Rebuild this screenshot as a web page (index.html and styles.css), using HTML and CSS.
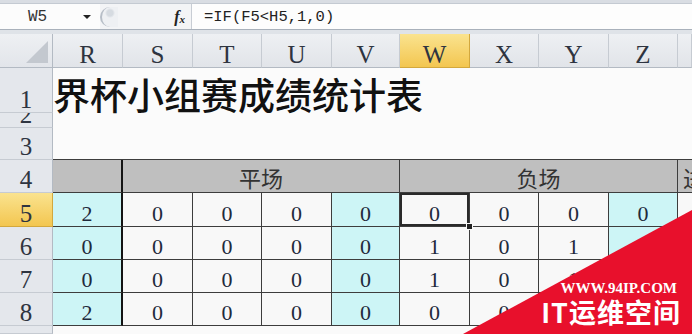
FILE: index.html
```html
<!DOCTYPE html>
<html lang="zh-CN">
<head>
    <meta charset="UTF-8">
    <meta name="viewport" content="width=device-width, initial-scale=1.0">
    <title>世界杯小组赛成绩统计表</title>
    <link rel="stylesheet" href="styles.css">
</head>
<body>
    <div class="top-edge"></div>

    <!-- 编辑栏 -->
    <div class="formula-bar">
        <div class="name-box">
            <span class="cell-ref">W5</span>
            <span class="drop"></span>
        </div>
        <div class="splitter"><span class="knob"></span></div>
        <div class="fx"><i>f</i><span>x</span></div>
        <div class="formula">=IF(F5&lt;H5,1,0)</div>
    </div>
    <div class="band"></div>

    <!-- 工作表 -->
    <div class="sheet">
        <div class="corner"><span class="tri"></span></div>
        <div class="col-head">R</div>
        <div class="col-head">S</div>
        <div class="col-head">T</div>
        <div class="col-head">U</div>
        <div class="col-head">V</div>
        <div class="col-head active">W</div>
        <div class="col-head">X</div>
        <div class="col-head">Y</div>
        <div class="col-head">Z</div>
        <div class="col-head"></div>

        <div class="row-head">1</div>
        <div class="blank">
            <div class="title">界杯小组赛成绩统计表</div>
        </div>
        <div class="row-head">2</div>
        <div class="row-head">3</div>

        <div class="row-head">4</div>
        <div class="cell hd first"></div>
        <div class="cell hd span4">平场</div>
        <div class="cell hd span4">负场</div>
        <div class="cell hd edge"><span class="peek">进</span></div>

        <div class="row-head active">5</div>
        <div class="cell cy first">2</div>
        <div class="cell">0</div>
        <div class="cell">0</div>
        <div class="cell">0</div>
        <div class="cell cy">0</div>
        <div class="cell sel">0</div>
        <div class="cell">0</div>
        <div class="cell">0</div>
        <div class="cell cy">0</div>
        <div class="cell edge"></div>

        <div class="row-head">6</div>
        <div class="cell cy first">0</div>
        <div class="cell">0</div>
        <div class="cell">0</div>
        <div class="cell">0</div>
        <div class="cell cy">0</div>
        <div class="cell">1</div>
        <div class="cell">0</div>
        <div class="cell">1</div>
        <div class="cell cy">2</div>
        <div class="cell edge"></div>

        <div class="row-head">7</div>
        <div class="cell cy first">0</div>
        <div class="cell">0</div>
        <div class="cell">0</div>
        <div class="cell">0</div>
        <div class="cell cy">0</div>
        <div class="cell">1</div>
        <div class="cell">0</div>
        <div class="cell">1</div>
        <div class="cell cy">2</div>
        <div class="cell edge"></div>

        <div class="row-head">8</div>
        <div class="cell cy first">2</div>
        <div class="cell">0</div>
        <div class="cell">0</div>
        <div class="cell">0</div>
        <div class="cell cy">0</div>
        <div class="cell">0</div>
        <div class="cell">0</div>
        <div class="cell">0</div>
        <div class="cell cy">0</div>
        <div class="cell edge"></div>

        <div class="row-head"></div>
        <div class="blank-low"></div>
    </div>

    <!-- 水印 -->
    <div class="watermark">
        <svg width="229" height="124" viewBox="0 0 229 124">
            <polygon points="0,124 229,0 229,124" fill="#e8102c"/>
        </svg>
        <div class="wm-text">
            <div class="wm-url">WWW.94IP.COM</div>
            <div class="wm-name">IT运维空间</div>
        </div>
    </div>
</body>
</html>
```

FILE: styles.css
```css
body {
    margin: 0;
    width: 692px;
    height: 334px;
    overflow: hidden;
    position: relative;
    background-color: #fafafa;
    font-family: "Liberation Serif", serif;
}

.top-edge {
    height: 3px;
    background-color: #d9dde3;
}

/* 编辑栏 */
.formula-bar {
    display: flex;
    height: 25px;
    border-top: 1px solid #c4cad2;
    border-bottom: 1px solid #a9b1bb;
    background-color: #f3f4f6;
}

.name-box {
    width: 100px;
    display: flex;
    align-items: center;
    background-color: #fcfcfc;
}

.cell-ref {
    margin-left: 28px;
    font-family: "Liberation Mono", monospace;
    font-size: 16px;
    color: #333;
}

.drop {
    margin-left: 36px;
    width: 0;
    height: 0;
    border-left: 4px solid transparent;
    border-right: 4px solid transparent;
    border-top: 4px solid #222;
}

.splitter {
    width: 18px;
    display: flex;
    align-items: center;
}

.knob {
    width: 16px;
    height: 20px;
    border-radius: 10px 0 0 10px;
    border-left: 2px solid #b7bec7;
    background: radial-gradient(circle at 8px 6px, #d6dbe1 3px, #eef0f3 5px);
}

.fx {
    width: 74px;
    display: flex;
    justify-content: flex-end;
    align-items: center;
    padding-right: 6px;
    box-sizing: border-box;
    border-right: 1px solid #c8cdd4;
    font-size: 16px;
    font-weight: bold;
    color: #222;
}

.fx span {
    font-size: 11px;
    font-style: italic;
    margin-top: 4px;
}

.formula {
    flex: 1;
    display: flex;
    align-items: center;
    padding-left: 12px;
    background-color: #fdfdfd;
    font-family: "Liberation Mono", monospace;
    font-size: 15.5px;
    color: #222;
}

.band {
    height: 4px;
    background-color: #dfe3e8;
}

/* 工作表 */
.sheet {
    display: grid;
    grid-template-columns: 53px 70px 70px 69px 70px 68px 70px 69px 70px 69px 1fr;
    grid-template-rows: 34px 45px 15px 32px 33px 34px 33px 33px 33px 1fr;
    height: 300px;
}

.corner {
    position: relative;
    background: linear-gradient(#eef0f3, #e2e5ea);
    border-right: 1px solid #b3bac3;
    border-bottom: 1px solid #b3bac3;
}

.tri {
    position: absolute;
    right: 4px;
    bottom: 4px;
    width: 0;
    height: 0;
    border-left: 22px solid transparent;
    border-bottom: 22px solid #c3c8cf;
}

.col-head {
    display: flex;
    justify-content: center;
    align-items: flex-end;
    font-size: 25px;
    line-height: 1;
    color: #2e3440;
    background: linear-gradient(#eef0f3, #e1e4e9);
    border-right: 1px solid #c6cbd2;
    border-bottom: 1px solid #b3bac3;
}

.col-head.active,
.row-head.active {
    background: linear-gradient(#fae38f, #f3c650);
    border-color: #d3a83d;
}

.row-head {
    grid-column: 1;
    display: flex;
    justify-content: center;
    align-items: flex-end;
    overflow: hidden;
    font-size: 25px;
    line-height: 1;
    color: #2e3440;
    background-color: #e4e7ec;
    border-right: 1px solid #b3bac3;
    border-bottom: 1px solid #c6cbd2;
}

.blank {
    grid-column: 2 / -1;
    grid-row: 2 / 5;
    background-color: #fbfbfb;
    border-bottom: 1px solid #3d3d3d;
    overflow: hidden;
}

.title {
    padding-top: 6px;
    font-family: "Noto Sans CJK SC", sans-serif;
    font-size: 37px;
    font-weight: 500;
    line-height: 40px;
    color: #111;
    white-space: nowrap;
}

.cell {
    display: flex;
    justify-content: center;
    align-items: flex-end;
    padding-bottom: 1px;
    font-size: 22px;
    line-height: 1;
    color: #1f2a3c;
    background-color: #f8f8f8;
    border-right: 1px solid #3d3d3d;
    border-bottom: 1px solid #3d3d3d;
    overflow: hidden;
}

.cell.cy {
    background-color: #cdf5f6;
}

.cell.first {
    border-right: 2px solid #141414;
}

.cell.hd {
    background-color: #bfbfbf;
    font-family: "Noto Sans CJK SC", sans-serif;
    font-size: 22px;
    color: #333;
    padding-bottom: 4px;
}

.span4 {
    grid-column: span 4;
}

.cell.edge {
    border-right: none;
    justify-content: flex-start;
}

.peek {
    padding-left: 5px;
}

.cell.sel {
    position: relative;
    z-index: 2;
    overflow: visible;
    box-shadow: inset 0 0 0 2px #2a2a2a;
}

.cell.sel::after {
    content: "";
    position: absolute;
    right: -4px;
    bottom: -4px;
    width: 5px;
    height: 5px;
    background-color: #222;
    border: 1px solid #fafafa;
}

.blank-low {
    grid-column: 2 / -1;
    background-color: #fafafa;
}

/* 水印 */
.watermark {
    position: absolute;
    right: 0;
    bottom: 0;
    width: 229px;
    height: 124px;
}

.watermark svg {
    position: absolute;
    left: 0;
    top: 0;
}

.wm-text {
    position: relative;
    display: flex;
    flex-direction: column;
    align-items: flex-end;
    padding-top: 70px;
    padding-right: 11px;
    color: #fff;
}

.wm-url {
    font-family: "Liberation Serif", serif;
    font-size: 15px;
    font-weight: bold;
    line-height: 16px;
    margin-right: 4px;
}

.wm-name {
    font-family: "Noto Sans CJK SC", sans-serif;
    font-size: 27px;
    font-weight: bold;
    letter-spacing: 1px;
    line-height: 32px;
}
```
